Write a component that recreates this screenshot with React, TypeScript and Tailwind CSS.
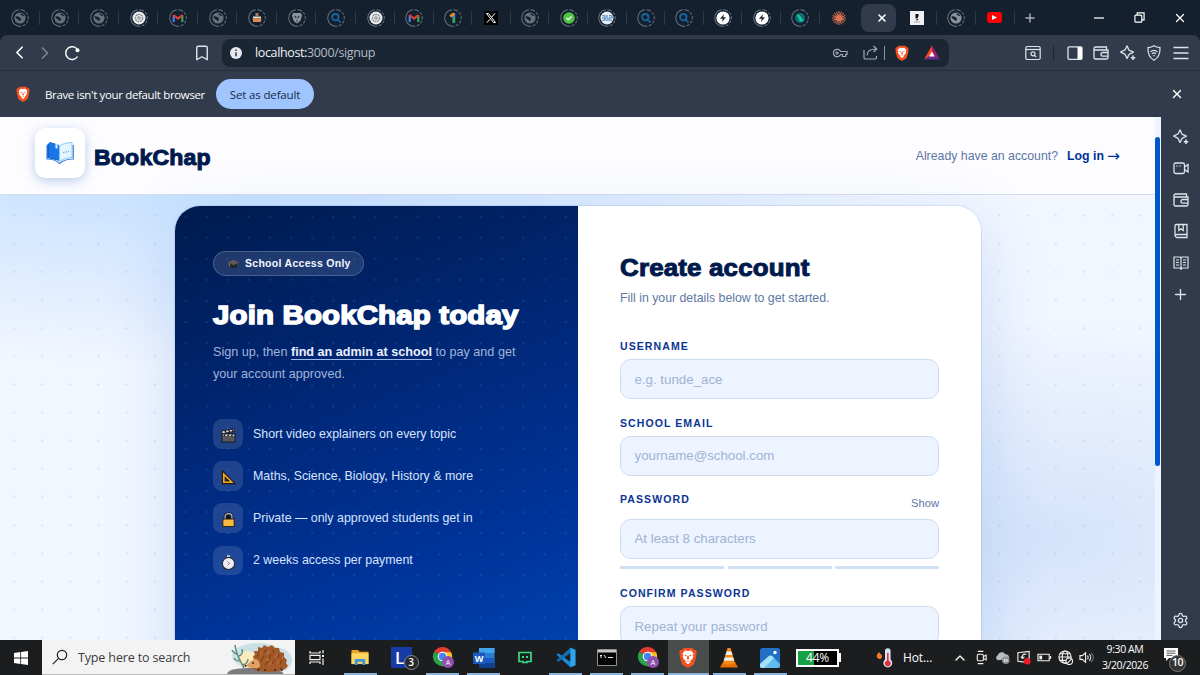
import React from 'react';
import clsx from 'clsx';
import { Bookmark, ChevronLeft, ChevronRight, ChevronUp, Plus, Settings, X } from 'lucide-react';

type IconProps = { className?: string };

/* ---------- small drawings ---------- */

const BraveIcon: React.FC<IconProps> = ({ className }) => (
  <svg viewBox="0 0 20 24" className={className}>
    <path d="M5 1h10l2 2.500 2-.2 1 3.500-.7 1.800.3 1.400-2.300 8.200c-.4 1.300-1.200 2.100-2.300 2.900L10 24l-5-2.900c-1.100-.8-1.900-1.600-2.300-2.900L.4 10l.3-1.400L0 6.800l1-3.500 2 .2z" fill="#f4511e" />
    <path d="M10 4.500l3.500-.5 3 3.600-1 1.600.6 2-1.600 3.200-2 1.300.5 1.300-3 2.700-3-2.700.5-1.300-2-1.300-1.600-3.200.6-2-1-1.600 3-3.600z" fill="#fff" />
    <path d="M5.500 8.500l3 .8-.6 1.700zM14.500 8.500l-3 .8.6 1.700zM9.300 10h1.400l.5 3.500L10 14.700l-1.200-1.200zM8.300 16.300L10 15.600l1.700.7-1.700.6z" fill="#f4511e" />
  </svg>
);

const Globe: React.FC<{ bright?: boolean }> = ({ bright }) => (
  <g>
    <circle cx="10" cy="10" r="5.600" fill={bright ? '#8a929b' : '#66707b'} />
    <path d="M5.600 8.300c1.500-.6 2.200.7 3.300.5.9 0 .6 1.200 1.600 1.400 1.200.2.500 1.900-.7 2.600-1.300.3-1-1.300-2.200-1.600-1.300-.3-2-.9-2-2.900zM10.600 5.600c-.8 1 .5 1.500 1.300 1.700.6.300 1 .900 2.500.700-.6-1.400-2-2.300-3.800-2.400z" fill="#14202e" />
  </g>
);

const tabGlyphs: Record<string, React.ReactNode> = {
  globe: <Globe />,
  globeBright: <Globe bright />,
  gpt: (
    <g>
      <circle cx="10" cy="10" r="6.500" fill="#e8eaec" />
      <circle cx="10" cy="10" r="3.600" fill="none" stroke="#858b92" strokeWidth="1.300" strokeDasharray="2 .6" />
      <circle cx="10" cy="10" r="1.300" fill="none" stroke="#858b92" />
    </g>
  ),
  gmail: (
    <g fill="none" strokeWidth="2.200">
      <path d="M5.700 14V7.200" stroke="#3f83f0" />
      <path d="M14.300 14V7.200" stroke="#31a853" />
      <path d="M5.500 7l4.500 3.500L14.500 7" stroke="#ea3a31" />
    </g>
  ),
  burger: (
    <g>
      <path d="M8.500 5h3v3h-3z" fill="#b0765a" />
      <path d="M6 8.500h8v2H6z" fill="#f0dccb" />
      <path d="M5.500 10.500h9l-.7 3.500H6.200z" fill="#d98a55" />
    </g>
  ),
  shield: (
    <g>
      <path d="M6 5h8l1 2.500-1.700 5.500L10 15.500 6.700 13 5 7.500z" fill="#8c949c" />
      <path d="M7 7.800l2.200.7.300 2.500zM13 7.800l-2.200.7-.3 2.500zM9 12.500h2l-1 1.500z" fill="#15202e" />
    </g>
  ),
  search: <path d="M9.300 6a3.200 3.200 0 100 6.400 3.200 3.200 0 000-6.400zM11.600 11.600l3 3" fill="none" stroke="#17659f" strokeWidth="1.800" />,
  one: (
    <g fill="none" strokeWidth="2.800">
      <path d="M10.800 5v5" stroke="#3f83f0" />
      <path d="M10.800 9.500V15" stroke="#2ea65a" />
      <path d="M11 5.600L7.200 8.300" stroke="#f28a2e" />
    </g>
  ),
  check: (
    <g>
      <circle cx="10" cy="10" r="5.800" fill="#51c443" />
      <path d="M7.500 10l1.800 1.800 3.300-3.400" fill="none" stroke="#fff" strokeWidth="1.300" />
    </g>
  ),
  world: (
    <g>
      <circle cx="10" cy="10" r="6.500" fill="#e4eef8" />
      <path d="M5 7.800h3v4.400H5M5 10h3M10 7v6M12 7.800h3v2.200h-3v2.200h3" fill="none" stroke="#4a82b7" strokeWidth="1.100" />
    </g>
  ),
  bolt: (
    <g>
      <circle cx="10" cy="10" r="6.600" fill="#fff" />
      <path d="M11 6L7 10.800h2.700L9 14l4-4.800h-2.700z" fill="#222a33" />
    </g>
  ),
  teal: (
    <g>
      <circle cx="10" cy="10" r="5" fill="#0d6f73" />
      <path d="M6.500 6.500l3 .5 4.500 6-4 .5z" fill="#1fc0a6" />
    </g>
  ),
};

const TabIcon: React.FC<{ kind: string }> = ({ kind }) => {
  if (kind === 'x') {
    return (
      <svg viewBox="0 0 14 14" className="h-[14px] w-[14px] bg-black">
        <path d="M2.500 2.500h2l7 9h-2zM11 2.300L7.800 6M6 8.200l-3.300 3.600" fill="none" stroke="#fff" />
      </svg>
    );
  }
  if (kind === 'claude') {
    return (
      <svg viewBox="0 0 14 14" className="h-[14px] w-[14px]">
        <path
          d="M7 0v14M0 7h14M2 2l10 10M12 2L2 12M4.400.6l5.200 12.800M9.600.6L4.400 13.400M.6 4.400l12.800 5.200M.6 9.600l12.800-5.200"
          stroke="#dd7350"
          strokeWidth="1.050"
        />
      </svg>
    );
  }
  return (
    <svg viewBox="0 0 20 20" className="h-5 w-5">
      <circle
        cx="10"
        cy="10"
        r="8.300"
        fill="none"
        stroke="#667381"
        strokeWidth="1"
        strokeDasharray="3 1.500 3 1.500 3 1.500 3 1.500 3 1.500 26 1.500"
        transform="rotate(-75 10 10)"
      />
      {tabGlyphs[kind]}
    </svg>
  );
};

const firstTabs = ['globe', 'globe', 'globe', 'gpt', 'gmail', 'globe', 'burger', 'shield', 'search', 'gpt'];
const secondTabs = ['gmail', 'one', 'x', 'globe', 'check', 'world', 'search', 'search', 'bolt', 'bolt', 'teal', 'claude'];

/* ---------- browser chrome ---------- */

const Separator: React.FC<IconProps> = ({ className }) => <span className={clsx('h-[14px] w-px bg-[#2e3a48]', className)} />;

const TabStrip: React.FC = () => (
  <div className="flex h-[35px] items-center">
    {firstTabs.map((kind, i) => (
      <div key={i} className="flex w-[39.500px] shrink-0 items-center justify-between pl-[10px]">
        <TabIcon kind={kind} />
        <Separator />
      </div>
    ))}
    {secondTabs.map((kind, i) => (
      <div key={i} className="relative flex w-[38.600px] shrink-0 items-center justify-center">
        <TabIcon kind={kind} />
        {i < secondTabs.length - 1 && <Separator className="absolute right-0" />}
      </div>
    ))}
    <div className="ml-[2.500px] flex h-[28px] w-[35px] shrink-0 items-center justify-center rounded-lg bg-[#313b4c] pl-[7px]">
      <X size={12} strokeWidth={3.200} className="text-white" />
    </div>
    <svg viewBox="0 0 14 14" className="ml-[14px] h-[14px] w-[14px] bg-[#eef0f5]">
      <path d="M5.500 3h3v2l-1 2.500h-2zM6.500 8h2l-2 2z" fill="#111" />
      <path d="M4 11h6" stroke="#aaa" />
    </svg>
    <Separator className="ml-[12px]" />
    <div className="ml-[9px]">
      <TabIcon kind="globeBright" />
    </div>
    <Separator className="ml-[9px]" />
    <div className="ml-[11px] flex h-[11px] w-[15px] items-center justify-center rounded-[3px] bg-[#f00]">
      <svg viewBox="0 0 6 6" className="h-[5px] w-[5px]">
        <path d="M0 0l6 3-6 3z" fill="#fff" />
      </svg>
    </div>
    <Separator className="ml-[12px]" />
    <Plus size={14} strokeWidth={2.500} className="ml-[8.500px] text-[#a8b0ba]" />
    <div className="ml-auto flex items-center pr-[13px] text-white">
      <svg viewBox="0 0 12 12" className="h-3 w-[10px]">
        <path d="M0 6h12" stroke="currentColor" strokeWidth="1.500" />
      </svg>
      <svg viewBox="0 0 12 12" className="ml-[30px] h-[11px] w-[11px]" fill="none" stroke="currentColor" strokeWidth="1.300">
        <rect x="1" y="3.500" width="7.500" height="7.500" rx="1" />
        <path d="M3.500 3.500V1H11v7.500H8.500" />
      </svg>
      <X size={14} strokeWidth={2.200} className="ml-[28px]" />
    </div>
  </div>
);

const WalletIcon: React.FC<IconProps> = ({ className }) => (
  <svg viewBox="0 0 16 16" className={className} fill="none" stroke="currentColor" strokeWidth="1.300">
    <path d="M1 3v9.500A1.500 1.500 0 002.500 14h11a1.500 1.500 0 001.500-1.500V5H2.500A1.300 1.300 0 011 3.500C1 2.700 1.700 2 2.500 2h11v3" />
    <path d="M15 7.500H9.800a1.700 1.700 0 000 3.700H15" />
  </svg>
);

const LeoIcon: React.FC<IconProps> = ({ className }) => (
  <svg viewBox="0 0 16 16" className={className} fill="none" stroke="currentColor" strokeWidth="1.300" strokeLinejoin="round">
    <path d="M7 1c.6 0 .8 2.500 1.800 3.800S13.500 6.400 13.500 7 10.800 8 9.300 9.300 7.600 13.500 7 13.500 6.200 10.600 4.900 9.300.6 7.600.6 7 3.600 6.200 5 4.800 6.400 1 7 1z" />
    <path d="M13 10.500v4.500M10.800 12.700h4.500" strokeWidth="1.500" />
  </svg>
);

const Toolbar: React.FC = () => (
  <div className="flex h-[36px] items-center rounded-t-[8px] border-b border-[#252f3d] bg-[#313b4c] text-[#dfe4ea]">
    <ChevronLeft size={21} strokeWidth={1.900} className="ml-[9px] text-white" />
    <ChevronRight size={20} strokeWidth={1.900} className="ml-[5px] text-[#7f8895]" />
    <svg viewBox="0 0 16 16" className="ml-[9px] h-4 w-4">
      <path d="M13.600 11.500A6.400 6.400 0 1114 5.500" fill="none" stroke="#fff" strokeWidth="1.400" />
      <circle cx="13.500" cy="5.300" r="2" fill="#fff" />
    </svg>
    <Bookmark size={18} strokeWidth={1.900} className="ml-[113px]" />
    <div className="ml-[11px] flex h-[28px] w-[727px] items-center rounded-lg bg-[#1b2635]">
      <svg viewBox="0 0 12 12" className="ml-[8px] h-3 w-3">
        <circle cx="6" cy="6" r="6" fill="#e6eaf0" />
        <path d="M6 5.200v4M6 2.600v1.500" stroke="#1b2635" strokeWidth="1.400" />
      </svg>
      <div className="mt-[2px] ml-[13px] text-[12.500px] tracking-[-0.36px] text-[#f0f2f5]">
        localhost:<span className="text-[#b3bac4]">3000/signup</span>
      </div>
      <div className="ml-auto flex items-center text-[#a3abb6]">
        <svg viewBox="0 0 15 10" className="h-[10px] w-[15px]" fill="none" stroke="currentColor" strokeWidth="1.200">
          <path d="M7.500 3.500A3.700 3.700 0 107.500 6.500H9.500V8.500h3.200v-2H14v-3z" />
          <circle cx="4" cy="5" r="1" />
        </svg>
        <svg viewBox="0 0 15 15" className="ml-[15px] h-[15px] w-[15px]" fill="none" stroke="currentColor" strokeWidth="1.200">
          <path d="M1 5v7.500A1.500 1.500 0 002.500 14H12a1.500 1.500 0 001.500-1.500V11M4 10.500C4 6 7.500 4 13.500 4M10.500 1l3.200 3-3.200 3" />
        </svg>
        <span className="ml-[6px] h-[14px] w-px bg-[#8d96a3]" />
        <BraveIcon className="ml-[10px] h-[16px] w-[14px]" />
        <svg viewBox="0 0 17 15" className="mr-[9px] ml-[15px] h-[15px] w-[16px]">
          <path d="M8.500 0L0 15l8.500-5z" fill="#ff4724" />
          <path d="M8.500 0L17 15l-8.500-5z" fill="#9e1f63" />
          <path d="M0 15h17l-8.500-5z" fill="#662d91" />
          <path d="M8.500 6.500l3 5.300h-6z" fill="#fff" />
        </svg>
      </div>
    </div>
    <div className="ml-auto flex items-center">
      <svg viewBox="0 0 16 16" className="h-4 w-4" fill="none" stroke="currentColor" strokeWidth="1.200">
        <rect x=".8" y="1.500" width="14.400" height="13" rx="1.500" />
        <path d="M1 4.500h14" />
        <circle cx="8" cy="8.800" r="2" />
        <path d="M9.500 10.300l1.800 1.800" />
      </svg>
      <span className="ml-[12px] h-[14px] w-px bg-[#1b2635]" />
      <svg viewBox="0 0 16 16" className="ml-[13px] h-4 w-4">
        <rect x="1" y="1.800" width="14" height="12.500" rx="1.200" fill="none" stroke="currentColor" strokeWidth="1.300" />
        <path d="M10.500 2H15v12.300h-4.500z" fill="#fff" />
      </svg>
      <WalletIcon className="ml-[10px] h-4 w-4" />
      <LeoIcon className="ml-[11px] h-4 w-4" />
      <svg viewBox="0 0 16 16" className="ml-[10px] h-4 w-4" fill="none" stroke="currentColor" strokeWidth="1.200">
        <path d="M8 .8c2 1.300 4 1.700 6 1.800.300 6-.8 9.800-6 12.600C2.800 12.400 1.700 8.600 2 2.600 4 2.500 6 2.100 8 .8z" />
        <path d="M4.500 6.800c2-1.700 5-1.700 7 0M6 8.800c1.200-1 2.800-1 4 0M7.300 10.700h1.400" />
      </svg>
      <svg viewBox="0 0 16 16" className="mr-[11px] ml-[11px] h-4 w-4" stroke="currentColor" strokeWidth="1.600">
        <path d="M.5 2.500h15M.5 8h15M.5 13.500h15" />
      </svg>
    </div>
  </div>
);

const InfoBar: React.FC = () => (
  <div className="flex h-[46px] items-center bg-[#313b4c] text-[11.500px] text-white">
    <BraveIcon className="ml-[16px] h-[16px] w-[14px]" />
    <span className="mt-[1px] ml-[15px] w-[171px] tracking-[-0.35px] whitespace-nowrap">Brave isn&apos;t your default browser</span>
    <button className="h-[30px] w-[98px] rounded-full bg-[#a0c5fe] pt-[1px] tracking-[-0.15px] text-[#142a4a]">Set as default</button>
    <X size={14} strokeWidth={2.300} className="mr-[16px] ml-auto" />
  </div>
);

const SideBar: React.FC = () => (
  <div className="flex w-[39px] shrink-0 flex-col items-center bg-[#313b4c] pt-[12px] pb-[11px] text-[#dfe4ea]">
    <LeoIcon className="h-4 w-4" />
    <svg viewBox="0 0 16 16" className="mt-[15px] h-4 w-4" fill="none" stroke="currentColor" strokeWidth="1.300">
      <rect x="1" y="3" width="10.500" height="10.500" rx="1.800" />
      <path d="M11.500 7L15 4.500v7.500l-3.500-2.500M3.500 6h1M6.500 6h1" />
    </svg>
    <WalletIcon className="mt-[16px] h-4 w-4" />
    <svg viewBox="0 0 16 16" className="mt-[15px] h-4 w-4" fill="none" stroke="currentColor" strokeWidth="1.300">
      <path d="M14 11.500H3.500a1.600 1.600 0 000 3H14V1.500H3.500A1.600 1.600 0 002 3v10M5.800 1.500v6L8 5.800l2.200 1.700v-6" />
    </svg>
    <svg viewBox="0 0 16 16" className="mt-[16px] h-4 w-4" fill="none" stroke="currentColor" strokeWidth="1.200">
      <path d="M8 3L7 2H1v11h6l1 1 1-1h6V2H9zM8 3v12M3 5h3M3 7.500h3M3 10h3M10 5h3M10 7.500h3M10 10h3" />
    </svg>
    <Plus size={17} strokeWidth={1.900} className="mt-[15px]" />
    <Settings size={17} strokeWidth={1.800} className="mt-auto" />
  </div>
);

/* ---------- signup page ---------- */

const BookLogo: React.FC = () => (
  <svg viewBox="0 0 28 24" className="h-[24px] w-[28px]">
    <path d="M1 4l3-3 9 3 1 16L1 17z" fill="#0b62cc" />
    <path d="M3 2.500C7 1.500 11 3 13.500 5v15C10.500 17.500 6 16.500 3 17z" fill="#1976e6" />
    <path d="M13.500 5C16 3 21 1.500 26 1.500v15c-4.500 0-9 1.500-12.500 4z" fill="#e4f5ff" stroke="#7fd0fa" strokeWidth="1" />
    <path d="M1 4.500V18c5 0 9 1 12.500 4.500C17 19.500 22 18 27.300 18V4" fill="none" stroke="#3c7fd2" strokeWidth="1.200" />
    <path d="M9.500 2.800l2 .8V8l-1-.8-1 .3z" fill="#d9f0ff" />
    <path d="M17 11.500l6-1" stroke="#5ba2df" strokeDasharray="1.500 1" />
  </svg>
);

const SiteHeader: React.FC = () => (
  <header className="flex h-[78px] shrink-0 items-center border-b border-[#d2def0] bg-[#fdfdff] pr-[40px] pl-[35px]">
    <div className="mb-[5px] flex h-[50px] w-[50px] items-center justify-center rounded-[10px] bg-white shadow-[0_3px_12px_rgba(0,71,171,0.28)]">
      <BookLogo />
    </div>
    <span className="mt-[3px] ml-[9px] origin-left scale-x-[1.050] text-[22px] font-bold tracking-[0.150px] text-[#001a4d] [-webkit-text-stroke:1px_#001a4d]">
      BookChap
    </span>
    <span className="mt-[1px] ml-auto text-[12.320px] text-[#5d77a4]">Already have an account?</span>
    <a className="mt-[1px] ml-[9px] flex items-center text-[12.320px] font-bold text-[#003399]">
      Log in
      <span className="ml-[3px] w-[14px] font-['DejaVu_Sans'] text-[15.500px] leading-[14px] font-normal">→</span>
    </a>
  </header>
);

const features = [
  {
    text: 'Short video explainers on every topic',
    icon: (
      <g>
        <path d="M1 6h14v9H1z" fill="#55575a" stroke="#17191d" />
        <path d="M1 6V3l13-2 .5 2.500L2 6z" fill="#ddd" stroke="#17191d" />
        <path d="M2 7h12v1.500H2z" fill="#ddd" />
        <path d="M4 2.500l1.500 2.500M8 2l1.500 2.300M12 1.500L13 4M3 8.700l1.500-2M7 8.700l1.500-2M11 8.700l1.500-2" stroke="#17191d" strokeWidth="1.400" />
      </g>
    ),
  },
  {
    text: 'Maths, Science, Biology, History & more',
    icon: <path d="M1.500 1V14.500H15zM4.500 8v3.700h3.800z" fill="#f6a91f" fillRule="evenodd" stroke="#211a14" strokeWidth="1.200" />,
  },
  {
    text: 'Private — only approved students get in',
    icon: (
      <g>
        <path d="M4.300 8V5.500c0-5 7.400-5 7.400 0V8" fill="none" stroke="#15171c" strokeWidth="3.200" />
        <path d="M4.300 8V5.500c0-5 7.400-5 7.400 0V8" fill="#101828" stroke="#b5bdc9" strokeWidth="1.300" />
        <path d="M2 7.500h12v8H2z" fill="#fcb73e" stroke="#251d15" />
      </g>
    ),
  },
  {
    text: '2 weeks access per payment',
    icon: (
      <g>
        <path d="M6.500.3h3v2.500h-3z" fill="#ddd" />
        <circle cx="8" cy="9" r="6.500" fill="#eceef4" stroke="#252b36" strokeWidth="1.200" />
        <path d="M7 7l2 2-2 2" fill="none" stroke="#b0425c" strokeWidth=".9" />
      </g>
    ),
  },
];

const Intro: React.FC = () => (
  <section className="flex w-[403px] shrink-0 flex-col bg-[radial-gradient(circle,rgba(255,255,255,0.09)_0.9px,transparent_1.3px),linear-gradient(160deg,#001a4d_0%,#003399_51%,#0052c4_85%)] bg-[size:21.120px_21.120px,100%_100%] pt-[45px] pl-[38px]">
    <div className="flex h-[25px] w-[151px] items-center rounded-full border border-white/20 bg-white/12 pl-[13px]">
      <svg viewBox="0 0 14 12" className="h-[10px] w-[13px]">
        <path d="M3 5v4c2 2.500 6 2.500 8 0V5z" fill="#26231d" />
        <path d="M7 1l7 3-7 3.500L0 4z" fill="#5f594f" />
        <path d="M2 5v4" stroke="#c59a33" strokeWidth=".8" />
      </svg>
      <span className="mt-[1px] ml-[5px] text-[10.560px] font-bold tracking-[0.26px] text-[#f2f6ff]">School Access Only</span>
    </div>
    <h1 className="mt-[21px] origin-left scale-x-[1.110] text-[26.500px] leading-[36px] font-bold tracking-[0.150px] whitespace-nowrap text-white [-webkit-text-stroke:1.500px_white]">
      Join BookChap today
    </h1>
    <p className="mt-[9px] text-[12.640px] leading-[21.500px] text-[#a1b4d9]">
      Sign up, then <strong className="border-b border-[#9fbcf0] font-bold text-[#e9f0ff]">find an admin at school</strong> to pay and get
      <br />
      your account approved.
    </p>
    <ul className="mt-[34px] flex flex-col gap-[12.300px]">
      {features.map((f) => (
        <li key={f.text} className="flex items-center gap-[10px] text-[12.400px] text-[#d7e4ff]">
          <span className="flex h-[29.900px] w-[30px] items-center justify-center rounded-[8.800px] bg-white/12">
            <svg viewBox="0 0 16 16" className="mt-[3px] h-[15px] w-[15px]">
              {f.icon}
            </svg>
          </span>
          {f.text}
        </li>
      ))}
    </ul>
  </section>
);

const labelClass = 'block text-[10.560px] leading-[12px] font-bold tracking-[1.060px] text-[#0a3592]';
const inputClass =
  'block h-[40px] w-full rounded-[10.500px] border border-[#cddcf2] bg-[#eef4ff] px-[13.500px] text-[13.300px] outline-none placeholder:text-[#9db3d4]';

const SignupForm: React.FC = () => (
  <form className="flex-1 bg-white pt-[46px] pr-[42px] pl-[42px]">
    <h2 className="origin-left scale-x-[1.080] text-[24px] leading-[32px] font-bold tracking-[0.150px] whitespace-nowrap text-[#001a4d] [-webkit-text-stroke:1px_#001a4d]">
      Create account
    </h2>
    <p className="mt-[6px] text-[12.320px] leading-[16px] text-[#5d77a4]">Fill in your details below to get started.</p>

    <label className={clsx(labelClass, 'mt-[34px]')}>USERNAME</label>
    <input className={clsx(inputClass, 'mt-[7px]')} placeholder="e.g. tunde_ace" />

    <label className={clsx(labelClass, 'mt-[17.500px]')}>SCHOOL EMAIL</label>
    <input className={clsx(inputClass, 'mt-[7px]')} placeholder="yourname@school.com" />

    <div className="mt-[17.500px] flex justify-between">
      <label className={labelClass}>PASSWORD</label>
      <button type="button" className="mt-[3px] text-[11.200px] leading-[14px] font-medium text-[#5d77a4]">
        Show
      </button>
    </div>
    <input className={clsx(inputClass, 'mt-[8.500px]')} placeholder="At least 8 characters" />
    <div className="mt-[7px] flex gap-[3.500px]">
      <span className="h-[3px] flex-1 rounded-full bg-[#cfdff4]" />
      <span className="h-[3px] flex-1 rounded-full bg-[#cfdff4]" />
      <span className="h-[3px] flex-1 rounded-full bg-[#cfdff4]" />
    </div>

    <label className={clsx(labelClass, 'mt-[18px]')}>CONFIRM PASSWORD</label>
    <input className={clsx(inputClass, 'mt-[7.500px]')} placeholder="Repeat your password" />
  </form>
);

const SignupPage: React.FC = () => (
  <div className="relative flex w-[1161px] shrink-0 flex-col overflow-hidden bg-[#f2f6ff] bg-[radial-gradient(circle,rgba(0,71,171,0.1)_0.9px,transparent_1.3px),radial-gradient(ellipse_700px_220px_at_200px_30px,rgba(145,200,255,0.55),transparent),radial-gradient(ellipse_420px_220px_at_1050px_420px,rgba(160,195,243,0.36),transparent)] bg-[size:28.160px_28.160px,100%_100%,100%_100%] font-['Liberation_Sans',Arial,sans-serif]">
    <SiteHeader />
    <main className="flex flex-1 justify-center pt-[11px] pr-[5px]">
      <div className="flex h-[720px] w-[806px] shrink-0 overflow-hidden rounded-[25px] shadow-[0_0_0_1px_rgba(0,71,171,0.1),0_20px_70px_rgba(0,90,200,0.16)]">
        <Intro />
        <SignupForm />
      </div>
    </main>
    {/* page scrollbar */}
    <div className="absolute top-0 right-0 h-full w-[6px] bg-[#eef4ff] pt-[20px]">
      <div className="h-[329px] w-[5px] rounded-full bg-[#0057cc]" />
    </div>
  </div>
);

/* ---------- taskbar ---------- */

const ChromeIcon: React.FC = () => (
  <svg viewBox="0 0 24 24" className="ml-[2px] h-[23px] w-[23px]">
    <path d="M11 11L2.300 6A10 10 0 0119.700 6z" fill="#e33b2e" />
    <path d="M11 11L2.300 6A10 10 0 0011 21l4-7z" fill="#2ba24c" />
    <path d="M11 6.500h9a10 10 0 01-9 14.500l4-7z" fill="#fcc31e" />
    <circle cx="11" cy="11" r="5" fill="#fff" />
    <circle cx="11" cy="11" r="3.900" fill="#4285f4" />
    <circle cx="16.700" cy="16.700" r="6.300" fill="#8e4fae" />
    <text x="16.700" y="19.500" textAnchor="middle" fontSize="7.500" fill="#fff">
      A
    </text>
  </svg>
);

const taskApps = [
  {
    name: 'explorer',
    open: true,
    icon: (
      <svg viewBox="0 0 20 18" className="h-[17px] w-[20px]">
        <path d="M1 1h7l1.500 2H19v13H1z" fill="#e6a623" />
        <path d="M1 4.500h18V16H1z" fill="#ffd662" />
        <path d="M4.500 17v-6.500h11V17h-3v-3.500h-5V17z" fill="#3c96d8" />
      </svg>
    ),
  },
  {
    name: 'l',
    open: false,
    icon: (
      <span className="relative flex h-[21px] w-[21px] items-center justify-center bg-[#173ba6] pr-[3px] text-[17px] font-semibold text-white">
        L
        <span className="absolute top-[8px] left-[13px] flex h-[15px] w-[15px] items-center justify-center rounded-full border border-[#888] bg-[#25282a] text-[10px]">3</span>
      </span>
    ),
  },
  { name: 'chrome', open: true, icon: <ChromeIcon /> },
  {
    name: 'word',
    open: true,
    icon: (
      <svg viewBox="0 0 22 20" className="ml-[2px] h-[20px] w-[22px]">
        <path d="M6 0h15.500v20H6z" fill="#2b7cd3" />
        <path d="M6 0h15.500v5H6z" fill="#41a5ee" />
        <path d="M6 10h15.500v5H6z" fill="#185abd" />
        <path d="M6 15h15.500v5H6z" fill="#103f91" />
        <path d="M0 4.500h12v11.500H0z" fill="#185abd" />
        <text x="6" y="13.500" textAnchor="middle" fontSize="9" fontWeight="700" fill="#fff">
          W
        </text>
      </svg>
    ),
  },
  {
    name: 'bot',
    open: false,
    icon: (
      <svg viewBox="0 0 14 13" className="ml-[2px] h-[13px] w-[14px]" fill="none" stroke="#36dc83" strokeWidth="1.700">
        <path d="M1 1.500h12v9H9v1H5v-1H1z" />
        <path d="M4 6h2M8 6h2" strokeWidth="2" />
      </svg>
    ),
  },
  {
    name: 'vscode',
    open: true,
    icon: (
      <svg viewBox="0 0 22 22" className="ml-[2px] h-[21px] w-[22px]">
        <path d="M1 8l2-1.500L16 16v5.500z" fill="#1b8ad6" />
        <path d="M1 14l2 1.500L16 6V.5z" fill="#1070b3" />
        <path d="M15.500.5L21 3v16l-5.500 2.500z" fill="#2ba5f0" />
      </svg>
    ),
  },
  {
    name: 'cmd',
    open: true,
    icon: (
      <svg viewBox="0 0 20 17" className="ml-[1px] h-[17px] w-[20px]">
        <path d="M.5.5h19v16H.5z" fill="#050505" stroke="#8f9191" />
        <path d="M1 1h18v2.500H1z" fill="#c6c8c8" />
        <path d="M3 6.500h2M3 8h2M7 6l2 3M11 8.500h5" stroke="#eee" />
      </svg>
    ),
  },
  { name: 'chrome2', open: true, icon: <ChromeIcon /> },
  { name: 'brave', open: true, active: true, icon: <BraveIcon className="h-[21px] w-[18px]" /> },
  {
    name: 'vlc',
    open: true,
    icon: (
      <svg viewBox="0 0 18 20" className="h-[20px] w-[18px]">
        <path d="M3 14h12l3 5.500H0z" fill="#e86f06" />
        <path d="M7.500 0h3l4.500 15c-2 2-10 2-12 0z" fill="#f58814" />
        <path d="M6.500 3.500h5l1 3.500h-7zM4.700 9.500h8.600l.9 3.300H3.800z" fill="#eee" />
      </svg>
    ),
  },
  {
    name: 'photos',
    open: true,
    icon: (
      <svg viewBox="0 0 20 20" className="h-[20px] w-[20px]">
        <rect width="20" height="20" rx="2.500" fill="#2270c4" />
        <path d="M0 16L9 8q1.500-1 3 0l8 8v2q0 2-2 2H2q-2 0-2-2z" fill="#5fbcec" />
        <path d="M0 16L9 8q1.500-1 3 0l2 2L4 20H2q-2 0-2-2z" fill="#a5e2fa" />
        <circle cx="15" cy="4.500" r="1.700" fill="#fff" />
      </svg>
    ),
  },
];

const Hedgehog: React.FC = () => (
  <svg viewBox="0 0 68 33" className="ml-auto h-[33px] w-[68px]">
    <ellipse cx="31" cy="15" rx="26" ry="13" fill="#c9e1e6" />
    <ellipse cx="50" cy="19" rx="15" ry="12" fill="#c9e1e6" />
    <ellipse cx="21" cy="19" rx="9" ry="9" fill="#fdebc0" />
    <path d="M0 33c2-6 12-5 20-6 16-3 32 0 37 6z" fill="#7b7b80" />
    <path d="M27 19l-1-4 2-1-1-4 4 0 0-4 4 1 2-3 4 2 4-2 3 3 4 0 1 4 4 1 0 4 3 3-1 3 2 3-3 3c-8 4-25 4-32 0z" fill="#a35a28" />
    <path
      d="M30 16l2-4M34 20l3-5M37 12l2-4M42 18l2-5M45 23l3-4M38 24l3-4M53 23l2-4M46 12l1-3M51 17l1-4"
      stroke="#71391a"
      strokeWidth="1"
    />
    <path d="M33 14l2-3M40 14l2-4M39 20l2-3M48 17l2-4M50 23l2-3M42 24l3-3M55 18l1-3" stroke="#c97f42" strokeWidth=".9" />
    <path d="M18 25c4-2 6-7 11-7 4 2 5 7 3 9-5 1-9-1-14-2z" fill="#dfa062" />
    <circle cx="26" cy="22" r=".9" fill="#222" />
    <circle cx="18.500" cy="24.800" r="1" fill="#222" />
    <path d="M32 27l-1 3M38 28v2M48 28v2M54 27l1 3" stroke="#5b321c" strokeWidth="2" />
    <path d="M17 27C14 20 9 15 8 4M11 13c-4 0-5-2-6-4M12 15c3-1 4-4 3-7M14 20c-4 0-6-1-7-3M16 24c3-1 5-3 5-6" fill="none" stroke="#5d8b76" strokeWidth="1.500" />
  </svg>
);

const TrayIcon: React.FC<{ className?: string; children: React.ReactNode }> = ({ className, children }) => (
  <svg viewBox="0 0 16 16" className={clsx('h-[15px] w-[15px] shrink-0', className)} fill="none" stroke="#f2f2f2" strokeWidth="1.200">
    {children}
  </svg>
);

const Taskbar: React.FC = () => (
  <div className="flex h-[35px] items-center overflow-hidden bg-[#1c1d1e] text-white">
    <div className="flex w-[42px] shrink-0 justify-center">
      <svg viewBox="0 0 14 14" className="h-[14px] w-[14px]">
        <path d="M0 2l6.300-.9v5.500H0zM7.100 1L14 0v6.600H7.100zM0 7.400h6.300v5.500L0 12zM7.100 7.400H14V14l-6.900-1z" fill="#fff" />
      </svg>
    </div>
    <div className="flex h-[35px] w-[253px] shrink-0 items-center border-b border-[#bbb] bg-[#f3f3f3] text-[#3b3b3b]">
      <svg viewBox="0 0 16 16" className="ml-[10px] h-[16px] w-[16px]" fill="none" stroke="#222" strokeWidth="1.200">
        <circle cx="10" cy="6" r="4.700" />
        <path d="M6.600 9.400L.8 15.200" />
      </svg>
      <span className="mt-[2px] ml-[10px] text-[12.500px] tracking-[-0.14px] whitespace-nowrap">Type here to search</span>
      <Hedgehog />
    </div>
    <div className="flex w-[44.500px] shrink-0 justify-center">
      <svg viewBox="0 0 16 15" className="h-[15px] w-[16px]" fill="none" stroke="#f2f2f2" strokeWidth="1.200">
        <path d="M1 1v2h10V1M1 14v-2h10v2M1 5.300h10v4.400H1zM14 0v3.500M14 8.500V15" />
        <path d="M13 5h2v2h-2z" fill="#f2f2f2" stroke="none" />
      </svg>
    </div>
    {taskApps.map((app) => (
      <div
        key={app.name}
        className={clsx('relative flex h-[35px] w-[41px] shrink-0 items-center justify-center', app.active && 'bg-[#4a4c4b]')}
      >
        {app.icon}
        {app.open && <span className={clsx('absolute bottom-0 h-[2px] bg-[#8ab4dc]', app.active ? 'w-full' : 'w-[33px]')} />}
      </div>
    ))}
    <div className="ml-[5.500px] flex shrink-0 items-center">
      <div className="flex h-[18px] w-[43px] items-center justify-center border-2 border-white bg-[linear-gradient(90deg,#18a145_42%,#000_42%)] text-[12px] tracking-[-0.2px]">
        44%
      </div>
      <div className="h-[9px] w-[2px] bg-white" />
    </div>
    <svg viewBox="0 0 18 20" className="ml-[35px] h-[20px] w-[18px] shrink-0">
      <path d="M3 11c-4-2-2-5 0-7 1 2 4 3 3 5s-1 2-3 2z" fill="#f47a2a" />
      <path d="M9 3a2.800 2.800 0 015.600 0v8.500a4.500 4.500 0 11-5.600 0z" fill="#d5e5f6" />
      <path d="M11 5h1.600v7.500a3 3 0 11-1.600 0z" fill="#e02e3e" />
    </svg>
    <span className="ml-[9px] w-[36px] text-[12px] tracking-[-0.1px]">Hot...</span>
    <ChevronUp size={16} strokeWidth={2} className="ml-[13px] shrink-0" />
    <TrayIcon className="ml-[6px]">
      <rect x="3.500" y="4.500" width="6.500" height="7" rx="1.500" />
      <path d="M10 7l3-1.500v5L10 9M4 1.500h6M4 14.500h6" />
    </TrayIcon>
    <TrayIcon className="ml-[6px]">
      <path d="M3 11a3 3 0 010-5.500C4 2 9 1 11 4.500c3 0 4.500 2 4 5z" fill="#b9bbbd" stroke="none" />
      <circle cx="11.500" cy="11" r="4" fill="#8c8e90" stroke="none" />
      <path d="M10.300 9.200v3.500M12.700 9.200v3.500" />
    </TrayIcon>
    <TrayIcon className="ml-[6px]">
      <path d="M2 3l12-1.500v12L2 12zM11 4.500C7 4 6 6 7 9M5 7l2 2 2-2" />
      <circle cx="12" cy="12" r="3.500" fill="#ee1c25" stroke="none" />
    </TrayIcon>
    <TrayIcon className="ml-[6px]">
      <path d="M1 4.500h12v7H1zM14.500 6.500v3" />
      <path d="M2.500 6h3v4h-3z" fill="#f2f2f2" stroke="none" />
    </TrayIcon>
    <TrayIcon className="ml-[6px]">
      <circle cx="7.500" cy="7.500" r="6.500" />
      <ellipse cx="7.500" cy="7.500" rx="3" ry="6.500" />
      <path d="M1 7.500h13M2 4h11M2 11h11" />
      <circle cx="12" cy="12" r="3.500" fill="#1c1d1e" />
      <path d="M9.800 14.200l4.400-4.400" />
    </TrayIcon>
    <TrayIcon className="ml-[6px]">
      <path d="M1 6h2.500L7 3v10l-3.500-3H1zM9 6c1 1 1 3 0 4M11 4.500c2 2 2 5 0 7" />
      <path d="M13 3c3 3 3 7 0 10" stroke="#777" />
    </TrayIcon>
    <div className="ml-[5px] w-[52px] shrink-0 text-center text-[10.500px] leading-[15.500px] tracking-[-0.4px] whitespace-nowrap">
      9:30 AM
      <br />
      3/20/2026
    </div>
    <div className="relative ml-[13px] h-[20px] w-[22px] shrink-0">
      <svg viewBox="0 0 14 14" className="h-[14px] w-[14px]">
        <path d="M0 0h14v10H5l-3 3v-3H0z" fill="#fff" />
        <path d="M2.500 3h9M2.500 5.200h9M2.500 7.400h6" stroke="#444" strokeWidth=".9" />
      </svg>
      <span className="absolute top-[7px] left-[5px] flex h-[17px] w-[17px] items-center justify-center rounded-full border border-[#777] bg-[#333536] text-[10.500px] font-semibold tracking-[-0.5px]">
        10
      </span>
    </div>
  </div>
);

const App: React.FC = () => (
  <div className="flex h-[675px] w-[1200px] flex-col overflow-hidden bg-[#14202e] font-['Open_Sans','Noto_Sans',sans-serif]">
    <TabStrip />
    <Toolbar />
    <InfoBar />
    <div className="flex h-[523px] overflow-hidden">
      <SignupPage />
      <SideBar />
    </div>
    <Taskbar />
  </div>
);

export default App;
